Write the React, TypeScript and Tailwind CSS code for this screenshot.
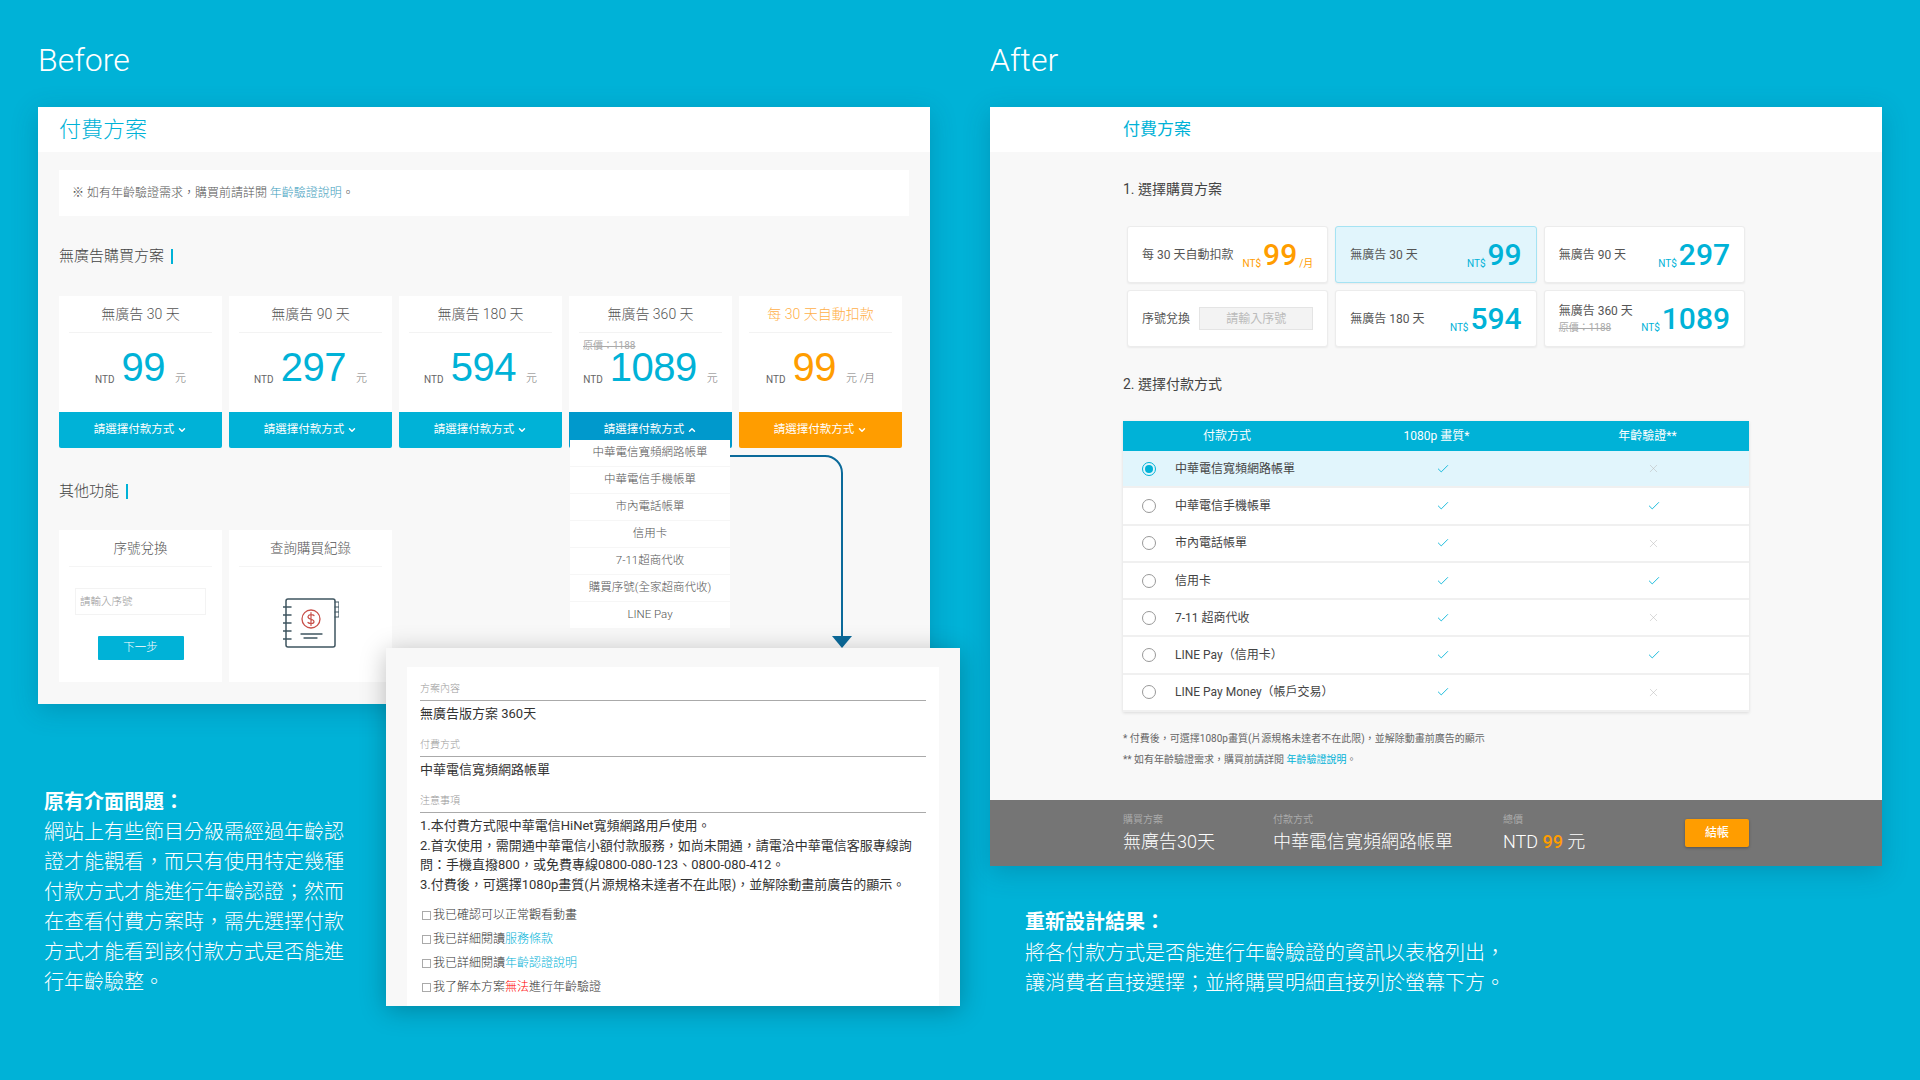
import { Check, ChevronDown, ChevronUp, X } from "lucide-react";

const BRAND = "#00b2d7";

const OLD_PLANS = [
  { title: "無廣告 30 天", price: "99", unit: "元" },
  { title: "無廣告 90 天", price: "297", unit: "元" },
  { title: "無廣告 180 天", price: "594", unit: "元" },
  { title: "無廣告 360 天", price: "1089", unit: "元", was: "原價：1188", open: true },
  { title: "每 30 天自動扣款", price: "99", unit: "元 /月", orange: true },
];

const OLD_METHODS = ["中華電信寬頻網路帳單", "中華電信手機帳單", "市內電話帳單", "信用卡", "7-11超商代收", "購買序號(全家超商代收)", "LINE Pay"];

const NEW_METHODS = [
  { name: "中華電信寬頻網路帳單", age: false, selected: true },
  { name: "中華電信手機帳單", age: true },
  { name: "市內電話帳單", age: false },
  { name: "信用卡", age: true },
  { name: "7-11 超商代收", age: false },
  { name: "LINE Pay（信用卡）", age: true },
  { name: "LINE Pay Money（帳戶交易）", age: false },
];

function SectionHeading({ children }: { children: React.ReactNode }) {
  return (
    <div className="flex h-[20px] items-center gap-[7px] text-[15px] font-light text-[#444]">
      {children}
      <span className="h-[15px] w-[2px] bg-[#00b2d7]" />
    </div>
  );
}

function OldPlanCard({ plan }: { plan: (typeof OLD_PLANS)[number] }) {
  const color = plan.orange ? "text-[#ff9d00]" : "text-[#00b2d7]";
  return (
    <div className="relative">
      <div className="relative h-[116px] bg-white px-[10px]">
        <div className={`flex h-[37px] items-center justify-center border-b border-[#f3f3f3] text-[14px] font-light ${plan.orange ? "text-[#ffb04a]" : "text-[#555]"}`}>
          {plan.title}
        </div>
        {plan.was && <div className="absolute left-[14px] top-[42px] text-[10px] text-[#aaa] line-through">{plan.was}</div>}
        <div className="mt-[11px] flex items-end justify-center">
          <span className="mb-[3px] mr-[7px] text-[10px] text-[#666]">NTD</span>
          <span className={`font-['Liberation_Sans'] text-[40px] leading-[46px] tracking-[-0.5px] ${color}`}>{plan.price}</span>
          <span className="mb-[3px] ml-[10px] text-[11px] font-light text-[#777]">{plan.unit}</span>
        </div>
      </div>
      <div className={`flex h-[36px] items-center justify-center gap-[3px] rounded-b-[2px] text-[11.5px] text-white ${plan.orange ? "bg-[#ff9d00]" : plan.open ? "bg-[#0099cc]" : "bg-[#00b2d7]"}`}>
        請選擇付款方式
        {plan.open ? <ChevronUp size={10} strokeWidth={3.5} /> : <ChevronDown size={10} strokeWidth={3.5} />}
      </div>
      {plan.open && (
        <div className="absolute left-[1px] top-[144px] z-10 flex w-[160px] flex-col gap-px bg-[#f6f6f6]">
          {OLD_METHODS.map((m) => (
            <div key={m} className="flex h-[26px] items-center justify-center bg-white text-[11.5px] font-light text-[#555]">
              {m}
            </div>
          ))}
        </div>
      )}
    </div>
  );
}

function LedgerIcon() {
  return (
    <svg width="56" height="52" viewBox="0 0 56 52" fill="none" strokeLinecap="round" aria-hidden="true">
      <rect x="3" y="2" width="49" height="48" rx="2" stroke="#3f5560" strokeWidth="1.5" fill="#fff" />
      <path d="M0 10h8M0 18h8M0 26h8M0 34h8M0 42h8" stroke="#3f5560" strokeWidth="1.5" />
      <path d="M52 5h4v5h-4M52 10h4v5h-4M52 15h4v5h-4" stroke="#3f5560" strokeWidth="1.2" />
      <circle cx="28" cy="22" r="9" stroke="#c8504a" strokeWidth="1.3" />
      <path d="M31 18.5c-1-1.2-5.5-1.5-6 1 -.5 3.5 6 2 6 5.2 0 2.3-4.7 2.2-6 .8M28 15.5v13" stroke="#c8504a" strokeWidth="1.2" />
      <path d="M18 37h21M21 41h13" stroke="#3f5560" strokeWidth="1.3" />
    </svg>
  );
}

function OtherCard({ title, children }: { title: string; children: React.ReactNode }) {
  return (
    <div className="h-[152px] bg-white px-[10px]">
      <div className="flex h-[37px] items-center justify-center border-b border-[#f5f5f5] text-[13.5px] font-light text-[#555]">{title}</div>
      {children}
    </div>
  );
}

function Popup() {
  return (
    <div className="absolute left-[348px] top-[648px] z-20 h-[358px] w-[574px] bg-[#f8f8f8] px-[21px] pt-[19px] shadow-[0_4px_24px_rgba(0,0,0,0.25)]">
      <div className="h-full overflow-hidden bg-white px-[13px] text-[#333]">
        <div className="flex h-[14px] mt-[14px] items-center text-[10px] font-light text-[#999]">方案內容</div>
        <div className="mt-[5px] flex h-[27px] items-center border-t border-[#aaa] text-[13px]">無廣告版方案 360天</div>
        <div className="mt-[10px] flex h-[14px] items-center text-[10px] font-light text-[#999]">付費方式</div>
        <div className="mt-[5px] flex h-[27px] items-center border-t border-[#aaa] text-[13px]">中華電信寬頻網路帳單</div>
        <div className="mt-[10px] flex h-[14px] items-center text-[10px] font-light text-[#999]">注意事項</div>
        <div className="mt-[5px] border-t border-[#aaa] pt-[3px] text-[13px] leading-[19.5px]">
          <p>1.本付費方式限中華電信HiNet寬頻網路用戶使用。</p>
          <p>2.首次使用，需開通中華電信小額付款服務，如尚未開通，請電洽中華電信客服專線詢問：手機直撥800，或免費專線0800-080-123、0800-080-412。</p>
          <p>3.付費後，可選擇1080p畫質(片源規格未達者不在此限)，並解除動畫前廣告的顯示。</p>
        </div>
        <div className="mt-[12px] flex flex-col gap-[5px] text-[12px] font-light leading-[19px]">
          <Agree>我已確認可以正常觀看動畫</Agree>
          <Agree>我已詳細閱讀<span className="text-[#00b2d7]">服務條款</span></Agree>
          <Agree>我已詳細閱讀<span className="text-[#00b2d7]">年齡認證說明</span></Agree>
          <Agree>我了解本方案<span className="text-[#f00]">無法</span>進行年齡驗證</Agree>
        </div>
      </div>
    </div>
  );
}

function Agree({ children }: { children: React.ReactNode }) {
  return (
    <div className="flex items-center gap-[2px]">
      <span className="ml-[2px] size-[9px] border border-[#aaa]" />
      <span>{children}</span>
    </div>
  );
}

function BeforeColumn() {
  return (
    <div className="relative w-[892px]">
      <div className="h-[107px] pt-[40px] text-[32px] font-light leading-[40px] text-white">Before</div>
      <div className="bg-[#f8f8f8] shadow-[0_6px_24px_rgba(0,70,100,0.25)]">
        <div className="flex h-[45px] items-center bg-white px-[21px] text-[22px] font-light text-[#00b2d7]">付費方案</div>
        <div className="px-[21px] pb-[22px] pt-[18px]">
          <div className="flex h-[46px] items-center bg-white px-[13px] text-[12px] font-light text-[#555]">
            ※ 如有年齡驗證需求，購買前請詳閱&nbsp;<span className="text-[#3d9dbd]">年齡驗證說明</span>。
          </div>
          <div className="mt-[30px]">
            <SectionHeading>無廣告購買方案</SectionHeading>
          </div>
          <div className="mt-[30px] grid w-[843px] grid-cols-5 gap-[7px]">
            {OLD_PLANS.map((p) => (
              <OldPlanCard key={p.title} plan={p} />
            ))}
          </div>
          <div className="mt-[33px]">
            <SectionHeading>其他功能</SectionHeading>
          </div>
          <div className="mt-[29px] grid w-[333px] grid-cols-2 gap-[7px]">
            <OtherCard title="序號兌換">
              <div className="mx-[6px] mt-[21px] flex h-[27px] items-center border border-[#f3f3f3] px-[4px] text-[10.5px] font-light text-[#999]">請輸入序號</div>
              <div className="mx-auto mt-[21px] flex h-[24px] w-[86px] items-center justify-center rounded-[1px] bg-[#00b2d7] text-[11.5px] font-light text-white">下一步</div>
            </OtherCard>
            <OtherCard title="查詢購買紀錄">
              <div className="mt-[30px] flex justify-center">
                <LedgerIcon />
              </div>
            </OtherCard>
          </div>
        </div>
      </div>
      <svg className="absolute left-[692px] top-[450px] z-10" width="130" height="200" viewBox="0 0 130 200" fill="none" aria-hidden="true">
        <path d="M0 6H95a17 17 0 0 1 17 17V188" stroke="#0b6a9a" strokeWidth="2" />
        <path d="M102 186h20l-10 12z" fill="#0b6a9a" />
      </svg>
      <Popup />
      <div className="ml-[6px] mt-[83px] w-[310px] text-[20px] font-light leading-[30px] text-white">
        <div className="font-bold">原有介面問題：</div>
        <p>網站上有些節目分級需經過年齡認證才能觀看，而只有使用特定幾種付款方式才能進行年齡認證；然而在查看付費方案時，需先選擇付款方式才能看到該付款方式是否能進行年齡驗整。</p>
      </div>
    </div>
  );
}

function PriceTag({ price, orange, suffix }: { price: string; orange?: boolean; suffix?: string }) {
  const color = orange ? "text-[#ff9d00]" : "text-[#00b2d7]";
  return (
    <div className={`flex items-end ${color}`}>
      <span className="mb-[2px] mr-[2px] text-[10px]">NT$</span>
      <span className="text-[30px] font-medium leading-[36px]">{price}</span>
      {suffix && <span className="mb-[2px] ml-[2px] text-[10px]">{suffix}</span>}
    </div>
  );
}

function PlanBox({ selected, children }: { selected?: boolean; children: React.ReactNode }) {
  return (
    <div className={`flex h-[57px] items-center justify-between rounded-[3px] border px-[14px] text-[12px] text-[#555] shadow-[0_1px_2px_rgba(0,0,0,0.06)] ${selected ? "border-[#a5e3f3] bg-[#e1f5fc]" : "border-[#ececec] bg-white"}`}>
      {children}
    </div>
  );
}

function AfterColumn() {
  return (
    <div className="w-[892px]">
      <div className="h-[107px] pt-[40px] text-[32px] font-light leading-[40px] text-white">After</div>
      <div className="flex h-[759px] flex-col bg-[#f8f8f8] shadow-[0_6px_24px_rgba(0,70,100,0.25)]">
        <div className="flex h-[45px] shrink-0 items-center bg-white px-[133px] text-[17px] text-[#00b2d7]">付費方案</div>
        <div className="px-[133px] pt-[27px]">
          <div className="h-[20px] text-[14px] leading-[20px] text-[#444]">1. 選擇購買方案</div>
          <div className="ml-[4px] mt-[27px] grid w-[618px] grid-cols-3 gap-[7px]">
            <PlanBox>
              <span>每 30 天自動扣款</span>
              <PriceTag price="99" orange suffix="/月" />
            </PlanBox>
            <PlanBox selected>
              <span>無廣告 30 天</span>
              <PriceTag price="99" />
            </PlanBox>
            <PlanBox>
              <span>無廣告 90 天</span>
              <PriceTag price="297" />
            </PlanBox>
            <PlanBox>
              <span>序號兌換</span>
              <div className="flex h-[23px] w-[114px] items-center justify-center border border-[#e4e4e4] bg-[#f3f3f3] text-[#bbb]">請輸入序號</div>
            </PlanBox>
            <PlanBox>
              <span>無廣告 180 天</span>
              <PriceTag price="594" />
            </PlanBox>
            <PlanBox>
              <div className="flex flex-col">
                <span>無廣告 360 天</span>
                <span className="text-[10px] text-[#aaa] line-through">原價：1188</span>
              </div>
              <PriceTag price="1089" />
            </PlanBox>
          </div>
          <div className="mt-[27px] h-[20px] text-[14px] leading-[20px] text-[#444]">2. 選擇付款方式</div>
          <div className="mt-[27px] w-[626px] shadow-[0_1px_3px_rgba(0,0,0,0.12)]">
            <div className="grid h-[30px] grid-cols-[208px_211px_211px] items-center bg-[#00b2d7] text-center text-[12px] text-white">
              <span>付款方式</span>
              <span>1080p 畫質*</span>
              <span>年齡驗證**</span>
            </div>
            {NEW_METHODS.map((m) => (
              <div key={m.name} className={`flex h-[37.3px] items-center border-b-2 border-[#f0f0f0] text-[12px] text-[#444] ${m.selected ? "bg-[#e1f5fc]" : "bg-white"}`}>
                <div className="flex w-[313px] items-center">
                  {m.selected ? (
                    <span className="ml-[19px] flex size-[14px] items-center justify-center rounded-full border border-[#00b2d7]">
                      <span className="size-[8px] rounded-full bg-[#00b2d7]" />
                    </span>
                  ) : (
                    <span className="ml-[19px] size-[14px] rounded-full border border-[#999]" />
                  )}
                  <span className="ml-[19px]">{m.name}</span>
                </div>
                <div className="w-[211px]">
                  <Check size={14} strokeWidth={1.5} className="text-[#00b2d7]" />
                </div>
                {m.age ? <Check size={14} strokeWidth={1.5} className="text-[#00b2d7]" /> : <X size={13} strokeWidth={1} className="text-[#bbb]" />}
              </div>
            ))}
          </div>
          <div className="mt-[20px] flex flex-col gap-[7px] text-[10px] leading-[14px] text-[#666]">
            <span>* 付費後，可選擇1080p畫質(片源規格未達者不在此限)，並解除動畫前廣告的顯示</span>
            <span>** 如有年齡驗證需求，購買前請詳閱 <span className="text-[#00b2d7]">年齡驗證說明</span>。</span>
          </div>
        </div>
        <div className="mt-auto flex h-[66px] shrink-0 bg-[#757575] px-[133px] pt-[14px] text-white">
          <FooterField className="w-[150px]" label="購買方案">無廣告30天</FooterField>
          <FooterField className="w-[230px]" label="付款方式">中華電信寬頻網路帳單</FooterField>
          <FooterField className="w-[182px]" label="總價">
            NTD <span className="font-medium text-[#ff9d00]">99</span> 元
          </FooterField>
          <div className="mt-[5px] flex h-[28px] w-[64px] items-center justify-center rounded-[2px] bg-[#ff9d00] text-[12px] font-medium shadow-[0_1px_3px_rgba(0,0,0,0.3)]">結帳</div>
        </div>
      </div>
      <div className="ml-[35px] mt-[41px] text-[20px] font-light leading-[30.5px] text-white">
        <div className="font-bold">重新設計結果：</div>
        <p>將各付款方式是否能進行年齡驗證的資訊以表格列出，</p>
        <p>讓消費者直接選擇；並將購買明細直接列於螢幕下方。</p>
      </div>
    </div>
  );
}

function FooterField({ label, className, children }: { label: string; className: string; children: React.ReactNode }) {
  return (
    <div className={className}>
      <div className="text-[10px] leading-[12px] text-[#aaa]">{label}</div>
      <div className="mt-[4px] text-[18px] font-light leading-[24px]">{children}</div>
    </div>
  );
}

export default function App() {
  return (
    <div
      className="flex h-[1080px] w-[1920px] gap-[60px] overflow-hidden pl-[38px] [font-family:Roboto,'Noto_Sans_CJK_TC',sans-serif]"
      style={{ backgroundColor: BRAND }}
    >
      <BeforeColumn />
      <AfterColumn />
    </div>
  );
}
